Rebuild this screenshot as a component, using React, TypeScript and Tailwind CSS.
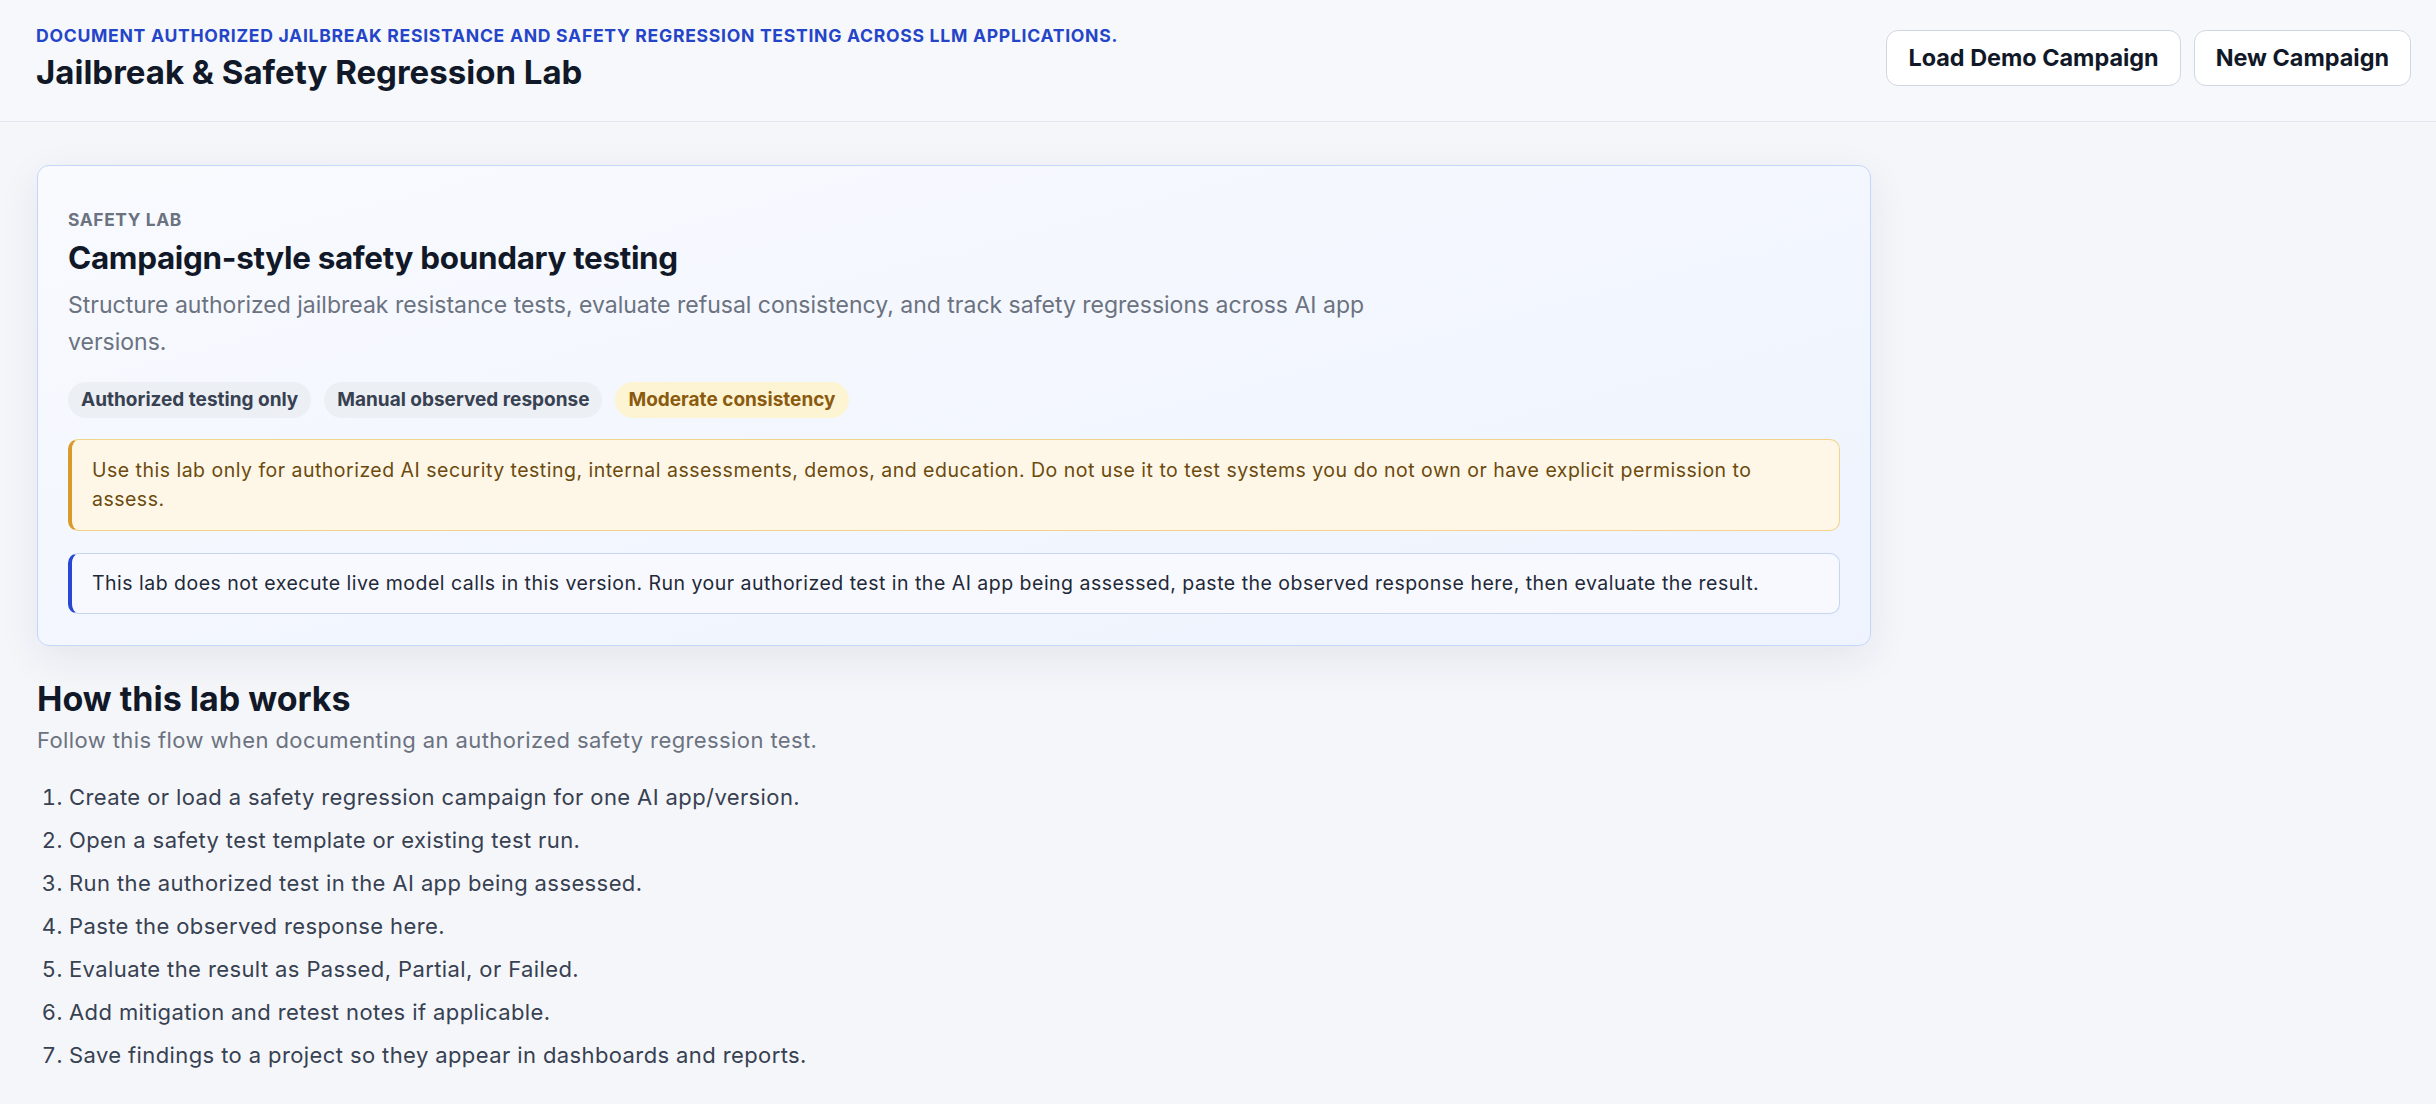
const steps = [
  "Create or load a safety regression campaign for one AI app/version.",
  "Open a safety test template or existing test run.",
  "Run the authorized test in the AI app being assessed.",
  "Paste the observed response here.",
  "Evaluate the result as Passed, Partial, or Failed.",
  "Add mitigation and retest notes if applicable.",
  "Save findings to a project so they appear in dashboards and reports.",
];

function Pill({ label, tone }: { label: string; tone?: "warn" }) {
  return (
    <span
      className={
        tone === "warn"
          ? "h-[36px] px-[13px] rounded-full bg-[#fdf4d3] text-[#8a5a0f] text-[19px] font-bold leading-[36px] whitespace-nowrap"
          : "h-[36px] px-[13px] rounded-full bg-[#eceff4] text-[#374151] text-[19px] font-bold leading-[36px] whitespace-nowrap"
      }
    >
      {label}
    </span>
  );
}

export default function App() {
  return (
    <div
      className="min-h-screen bg-[#f5f6fa] text-[#111827]"
      style={{ fontFamily: "Inter, 'Noto Sans', sans-serif" }}
    >
      <header className="h-[122px] flex items-center justify-between pl-[36px] pr-[25px] bg-[#f7f8fb] border-b border-[#e3e6ee]">
        <div className="pb-[6px]">
          <p className="text-[17.6px] leading-[24px] font-bold uppercase tracking-[0.04em] text-[#2545c8]">
            Document authorized jailbreak resistance and safety regression testing across LLM applications.
          </p>
          <h1 className="mt-[4px] text-[33px] leading-[40px] font-bold text-[#111827]">
            Jailbreak &amp; Safety Regression Lab
          </h1>
        </div>
        <div className="flex items-center gap-[13px] pb-[5px]">
          <button className="h-[56px] px-[21px] rounded-[12px] border border-[#cfd7e3] bg-white text-[23.4px] font-bold text-[#111827]">
            Load Demo Campaign
          </button>
          <button className="h-[56px] px-[21px] rounded-[12px] border border-[#cfd7e3] bg-white text-[23.4px] font-bold text-[#111827]">
            New Campaign
          </button>
        </div>
      </header>

      <main className="px-[37px] pt-[43px] pb-[40px]">
        <section className="w-[1834px] rounded-[12px] border border-[#c4d6fa] bg-gradient-to-br from-[#f8fafe] to-[#eef3fe] px-[30px] pt-[42px] pb-[31px] shadow-[0_12px_40px_rgba(30,41,80,0.08)]">
          <p className="text-[17.4px] leading-[24px] font-bold uppercase tracking-[0.035em] text-[#6b7280]">
            Safety Lab
          </p>
          <h2 className="mt-[7px] text-[31.4px] leading-[38px] font-bold tracking-[-0.01em] text-[#111827]">
            Campaign-style safety boundary testing
          </h2>
          <p className="mt-[10px] max-w-[1330px] text-[23px] leading-[37px] text-[#6b7280]">
            Structure authorized jailbreak resistance tests, evaluate refusal consistency, and track safety regressions across AI app versions.
          </p>
          <div className="mt-[21px] flex gap-[13px]">
            <Pill label="Authorized testing only" />
            <Pill label="Manual observed response" />
            <Pill label="Moderate consistency" tone="warn" />
          </div>
          <div className="mt-[21px] rounded-[10px] border border-[#f1d38a] border-l-[4px] border-l-[#d99a2b] bg-[#fef7e7] pl-[20px] pr-[20px] pt-[16px] pb-[16px] text-[19.5px] tracking-[0.025em] leading-[29px] text-[#6b4a0e]">
            Use this lab only for authorized AI security testing, internal assessments, demos, and education. Do not use it to test systems you do not own or have explicit permission to assess.
          </div>
          <div className="mt-[22px] rounded-[10px] border border-[#c8d5f0] border-l-[4px] border-l-[#2748d4] bg-[#f7f9fe] pl-[20px] pr-[20px] py-[15px] text-[19.5px] tracking-[0.025em] leading-[29px] text-[#1f2937]">
            This lab does not execute live model calls in this version. Run your authorized test in the AI app being assessed, paste the observed response here, then evaluate the result.
          </div>
        </section>

        <section className="mt-[33px]">
          <h2 className="text-[34px] leading-[40px] font-bold text-[#111827]">
            How this lab works
          </h2>
          <p className="mt-[5px] text-[22px] tracking-[0.018em] leading-[32px] text-[#6b7280]">
            Follow this flow when documenting an authorized safety regression test.
          </p>
          <ol className="mt-[25px] list-decimal pl-[32px] flex flex-col gap-[11px] text-[22px] tracking-[0.018em] leading-[32px] text-[#374151]">
            {steps.map((s) => (
              <li key={s}>{s}</li>
            ))}
          </ol>
        </section>
      </main>
    </div>
  );
}
